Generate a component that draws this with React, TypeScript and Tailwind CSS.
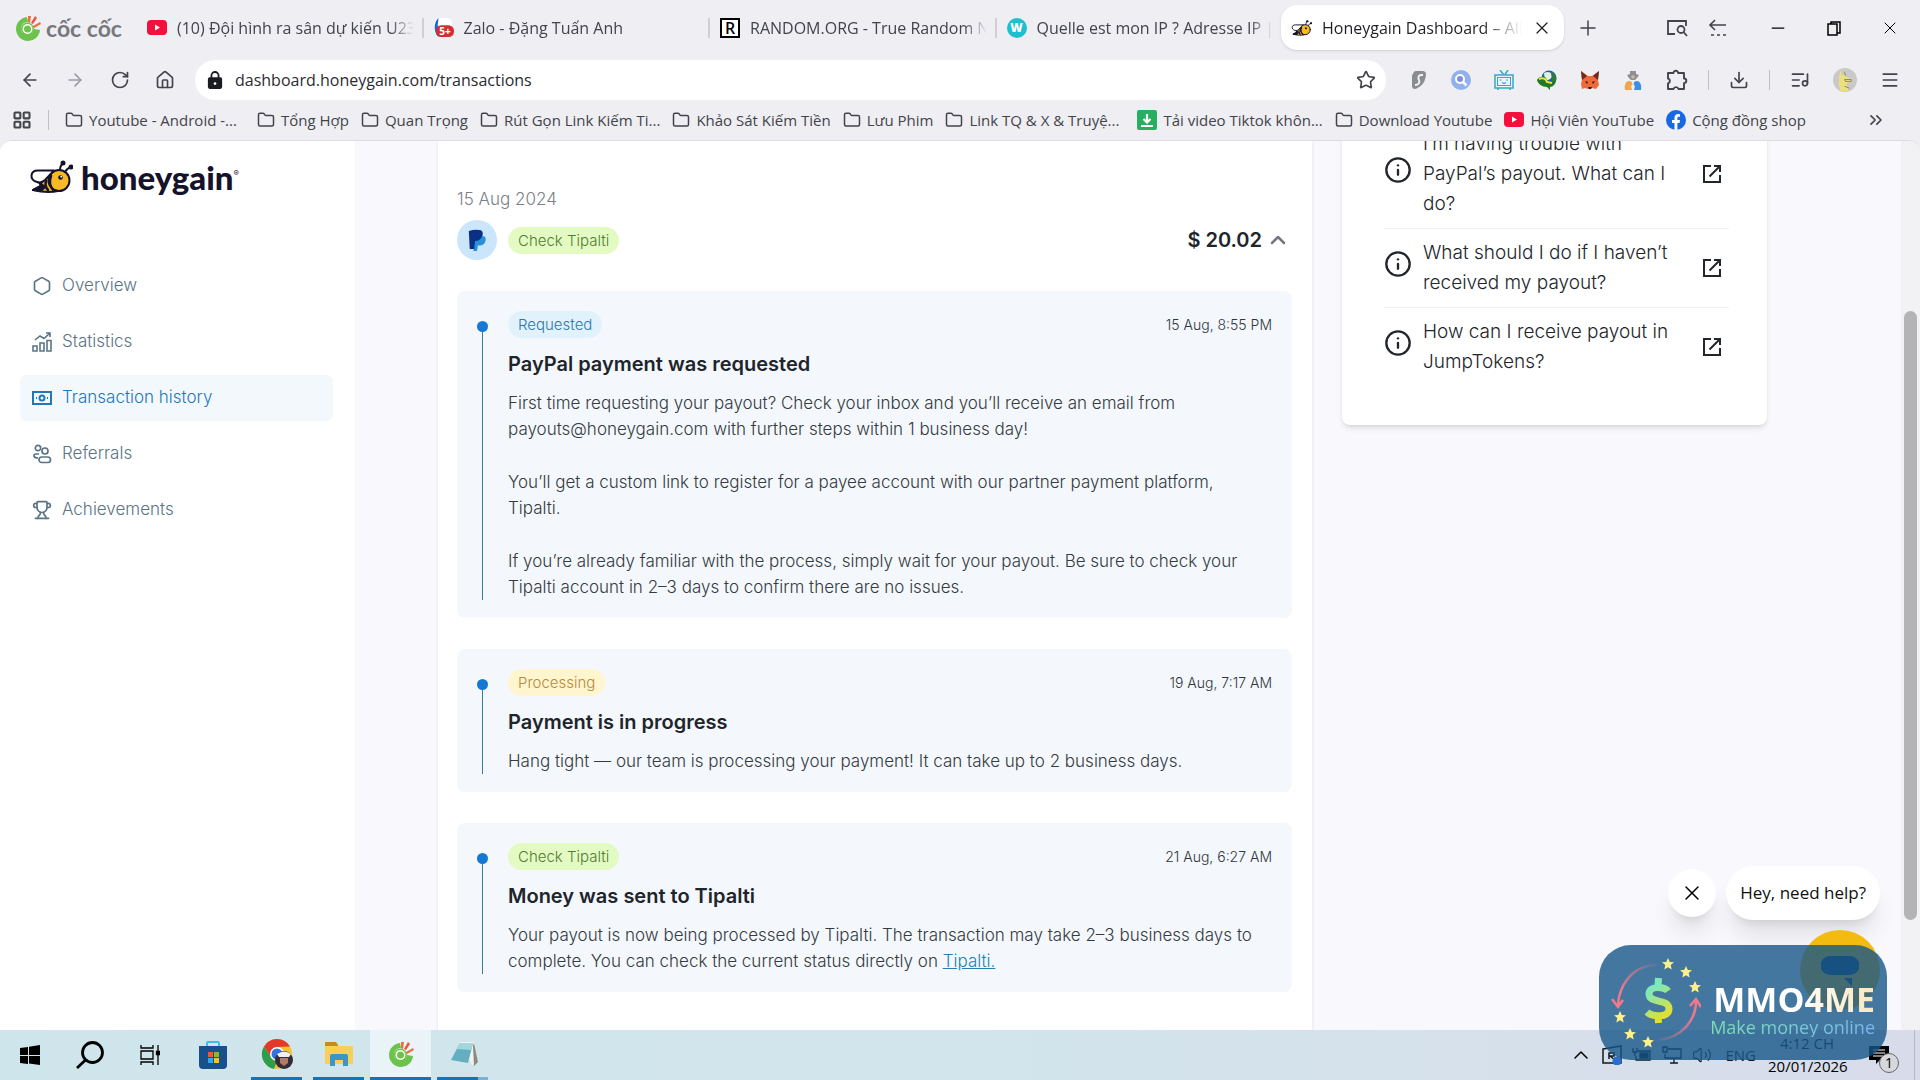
import React from 'react';
import {
  ArrowLeft, ArrowRight, RotateCw, House, Star, Download, ListMusic, Menu, X, Plus, Minus,
  Folder, LayoutGrid, ChevronsRight, ChevronUp, Hexagon, Trophy, Info, Volume2,
} from 'lucide-react';

interface Bookmark {
  label: string;
  icon?: React.ReactNode;
}

interface Step {
  status: string;
  badge: string;
  time: string;
  title: string;
  body: React.ReactNode[];
}

const CocCocMark = ({ className }: { className?: string }) => (
  <svg viewBox="0 0 28 28" className={className} aria-hidden="true">
    <path d="M13 3A12 12 0 1 0 26 16l-6-1a6.500 6.500 0 1 1-6-7z" fill="#6cc24a" />
    <circle cx="13.500" cy="15" r="6.500" fill="#6cc24a" />
    <circle cx="13.500" cy="15" r="5" fill="#fff" />
    <circle cx="13.500" cy="15" r="3.500" fill="#6cc24a" />
    <path d="M14 8l0-6 3 0-1 7z" fill="#e8703a" />
    <path d="M17 9l4-7 2 2-4 6z" fill="#e8553a" />
    <path d="M19 12l7-4 1 2-7 4z" fill="#e8703a" />
  </svg>
);

const YoutubeIcon = () => (
  <svg viewBox="0 0 20 16" className="h-4 w-5 shrink-0" aria-hidden="true">
    <rect width="20" height="15" rx="4" fill="#f4103c" />
    <path d="M8 4.500v6l5-3z" fill="#fff" />
  </svg>
);

const BeeIcon = ({ className }: { className?: string }) => (
  <svg viewBox="0 0 44 34" className={className} fill="none" stroke="#15132b" strokeWidth="2" strokeLinecap="round" strokeLinejoin="round" aria-hidden="true">
    <path d="M20 12 10 22l2 4-8 4c8 2 15 3 25 1z" fill="#f9b826" />
    <path d="M10 22l3 3-9 5c3 0 6 1 9 0l3-3z" fill="#15132b" />
    <circle cx="30" cy="20.500" r="10.500" fill="#f9b826" />
    <path d="M25 10.500H9c-8 0-9 9-1 11.500 3 1 6 0 8-2l9-9.500z" fill="#fff" />
    <path d="M17 21c-1 4 0 7 2 9M22 16c-2 5-1 11 3 15" strokeWidth="2.600" />
    <path d="M31 10c0-3 1-5 3-7M36 12c1-2 3-4 6-5" />
    <circle cx="34" cy="3" r="1.500" fill="#15132b" />
    <circle cx="42" cy="7" r="1.500" fill="#15132b" />
    <circle cx="31.500" cy="17.500" r="2.300" fill="#15132b" stroke="none" />
    <circle cx="32.200" cy="16.700" r="0.900" fill="#fff" stroke="none" />
  </svg>
);

const ExternalIcon = () => (
  <svg viewBox="0 0 24 24" className="size-6 shrink-0" fill="none" stroke="#22262b" strokeWidth="2" aria-hidden="true">
    <path d="M11 4H4v16h16v-7M14 4h6v6M20 4 9.500 14.500" />
  </svg>
);

const PuzzleIcon = () => (
  <svg viewBox="0 0 22 22" className="size-[22px]" fill="none" stroke="currentColor" strokeWidth="1.900" strokeLinejoin="round" aria-hidden="true">
    <path d="M2 4h5.500a2.300 2.300 0 1 1 4.600 0H18v5.500a2.300 2.300 0 1 1 0 4.600V20h-5.500a2.600 2.600 0 0 0-5 0H2v-5.500a2.600 2.600 0 0 0 0-5z" />
  </svg>
);

const ScanSearchIcon = () => (
  <svg viewBox="0 0 22 20" className="h-5 w-[22px]" fill="none" stroke="currentColor" strokeWidth="1.800" aria-hidden="true">
    <path d="M9 16H2V3h18v5" />
    <circle cx="15" cy="11.500" r="3.500" />
    <path d="m17.500 14 3.500 4" />
  </svg>
);

const PaypalIcon = () => (
  <svg viewBox="0 0 22 24" className="h-6 w-5" aria-hidden="true">
    <path d="M10 8h8c3 0 3 4 2 6-1 3-3 4-6 4h-2l-1 6H7z" fill="#2790d8" />
    <path d="M2 2q7-2 11-1c4 0 5 3 4 6s-4 6-7 6H9L8 22H3z" fill="#0a2f87" />
  </svg>
);

const tabs = [
  {
    title: '(10) Đội hình ra sân dự kiến U23',
    icon: <YoutubeIcon />,
  },
  {
    title: 'Zalo - Đặng Tuấn Anh',
    icon: (
      <svg viewBox="0 0 22 22" className="size-5 shrink-0" aria-hidden="true">
        <rect width="20" height="20" rx="6" fill="#fff" />
        <path d="M5 0C0 4-1 14 4 20L8 20 4 8z" fill="#1768d8" />
        <rect x="2" y="8" width="20" height="13" rx="6" fill="#d22f35" />
        <text x="12" y="19" fontSize="11" fontWeight="700" fill="#fff" textAnchor="middle" fontFamily="Open Sans">5+</text>
      </svg>
    ),
  },
  {
    title: 'RANDOM.ORG - True Random N',
    icon: (
      <span className="flex size-5 shrink-0 items-center justify-center border-2 border-black bg-white text-base leading-4 font-semibold text-black">R</span>
    ),
  },
  {
    title: 'Quelle est mon IP ? Adresse IP |',
    icon: (
      <span className="flex size-5 shrink-0 items-center justify-center rounded-full bg-[#1cc0cf] text-xs font-extrabold text-white">W</span>
    ),
  },
];

const bookmarks: Bookmark[] = [
  { label: 'Youtube - Android -...' },
  { label: 'Tổng Hợp' },
  { label: 'Quan Trọng' },
  { label: 'Rút Gọn Link Kiếm Ti...' },
  { label: 'Khảo Sát Kiếm Tiền' },
  { label: 'Lưu Phim' },
  { label: 'Link TQ & X & Truyệ...' },
  {
    label: 'Tải video Tiktok khôn...',
    icon: (
      <svg viewBox="0 0 20 20" className="size-5 shrink-0" aria-hidden="true">
        <rect width="20" height="20" rx="2" fill="#27ae60" />
        <path d="M10 4v8M6.500 9l3.500 3.500L13.500 9M4 16h12" stroke="#fff" strokeWidth="2.200" fill="none" />
      </svg>
    ),
  },
  { label: 'Download Youtube' },
  { label: 'Hội Viên YouTube', icon: <YoutubeIcon /> },
  {
    label: 'Cộng đồng shop',
    icon: (
      <svg viewBox="0 0 20 20" className="size-5 shrink-0" aria-hidden="true">
        <circle cx="10" cy="10" r="10" fill="#1668e3" />
        <path d="M8.500 20v-7H6v-3h2.500V8c0-2.500 1.500-4 3.700-4l1.800.2v2.500h-1.200c-1.100 0-1.400.7-1.400 1.400V10h2.600l-.5 3h-2.100v7z" fill="#fff" />
      </svg>
    ),
  },
];

const extensions = [
  {
    name: 'Surfshark',
    icon: (
      <svg viewBox="0 0 20 20" className="size-5">
        <path d="M8 1h6c3 0 4 1 4 4-1 8-5 12-11 14-2 0-3-1-3-3L4 6c1-3 2-5 4-5z" fill="#8b8c90" />
        <path d="M15 5h-2c-3 0-3 4-2 5 1 2 0 5-4 5" stroke="#f1f1f5" strokeWidth="2" fill="none" />
      </svg>
    ),
  },
  {
    name: 'Search',
    icon: (
      <svg viewBox="0 0 20 20" className="size-5">
        <circle cx="10" cy="10" r="10" fill="#91b1ee" />
        <circle cx="9" cy="9" r="4" stroke="#fff" strokeWidth="2" fill="#7f8fd8" />
        <path d="m12 12 3.500 3.500" stroke="#fff" strokeWidth="2.500" />
      </svg>
    ),
  },
  {
    name: 'TV',
    icon: (
      <svg viewBox="0 0 20 20" className="size-5" fill="none" stroke="#33a9c4" strokeWidth="1.500">
        <path d="M6 0l3.500 4.500M14 0l-3 4.500M4 18v2M16 18v2" />
        <rect x="1" y="5" width="18" height="13" fill="#e9f8fb" />
        <rect x="3.500" y="7.500" width="13" height="8" strokeWidth="1" />
        <path d="M5.500 10h2M12 10h2M8 12.500l2 1 2-1" strokeWidth="1.200" />
      </svg>
    ),
  },
  {
    name: 'Download Manager',
    icon: (
      <svg viewBox="0 0 20 20" className="size-5">
        <circle cx="12" cy="8" r="7.500" fill="#1f5f9e" />
        <path d="M7 3c4-2 7-1 8 2s-3 5-7 6z" fill="#dff0e0" />
        <path d="M14 2c4 1 6 5 5 9l-4 1z" fill="#2f7a3b" />
        <path d="M0 10c1-3 5-4 8-3l3 4 4 1 4-2c0 4-3 7-6 7v3l-3-3c-5 0-9-3-10-7z" fill="#237a22" />
        <path d="M2 9c4-2 7 0 8 3l5 1" stroke="#f0e34a" strokeWidth="2" fill="none" />
      </svg>
    ),
  },
  {
    name: 'MetaMask',
    icon: (
      <svg viewBox="0 0 20 20" className="size-5">
        <path d="M1 1l7 5h4l7-5-1 9 1 5-3 4-4-1-2 1H8l-3-1-3 1-1-5 1-4z" fill="#ed6a3a" />
        <path d="M1 1l6 5-5 4zM19 1l-6 5 5 4z" fill="#6b2b22" />
        <path d="M5 11l3 1-1 2zM15 11l-3 1 1 2zM8 17h4l-1 2H9z" fill="#2b1a1a" />
      </svg>
    ),
  },
  {
    name: 'Incognito',
    icon: (
      <svg viewBox="0 0 20 20" className="size-5">
        <path d="M7 1h6v3l3 1-2 3-2 2H8L6 8 4 5l3-1z" fill="#8f8f93" />
        <circle cx="10" cy="7" r="1.800" fill="#c9b9a0" />
        <path d="M2 20c-1-5 1-9 4-9 4 0 4 4 2 5l1 4z" fill="#f0a54e" />
        <path d="M18 20c1-5-1-9-4-9-4 0-4 4-2 5l-1 4z" fill="#3d8fe0" />
      </svg>
    ),
  },
];

const navItems = [
  { label: 'Overview', icon: <Hexagon className="size-5" strokeWidth={2} /> },
  {
    label: 'Statistics',
    icon: (
      <svg viewBox="0 0 20 20" className="size-5" fill="none" stroke="currentColor" strokeWidth="1.600">
        <path d="M1 14h4v5H1zM8 11h4v8H8zM15 8.500h4V19h-4zM3 8l5-4 4 2.500L18 1M14 1h4v4" />
      </svg>
    ),
  },
  {
    label: 'Transaction history',
    active: true,
    icon: (
      <svg viewBox="0 0 20 20" className="size-5" fill="none" stroke="currentColor" strokeWidth="2">
        <rect x="1" y="4" width="18" height="12" />
        <circle cx="10" cy="10" r="2.500" />
        <path d="M4 10h1M15 10h1" />
      </svg>
    ),
  },
  {
    label: 'Referrals',
    icon: (
      <svg viewBox="0 0 20 20" className="size-5" fill="none" stroke="currentColor" strokeWidth="1.700">
        <circle cx="6" cy="4" r="2.700" />
        <circle cx="13" cy="7" r="3" />
        <path d="M7 10H4c-3 0-3 4 2 4" />
        <rect x="7" y="13" width="11.500" height="5.500" rx="2.700" />
      </svg>
    ),
  },
  { label: 'Achievements', icon: <Trophy className="size-5" strokeWidth={2} /> },
];

const steps: Step[] = [
  {
    status: 'Requested',
    badge: 'bg-[#e2f2fc] text-[#2d78ad]',
    time: '15 Aug, 8:55 PM',
    title: 'PayPal payment was requested',
    body: [
      'First time requesting your payout? Check your inbox and you’ll receive an email from payouts@honeygain.com with further steps within 1 business day!',
      'You’ll get a custom link to register for a payee account with our partner payment platform, Tipalti.',
      'If you’re already familiar with the process, simply wait for your payout. Be sure to check your Tipalti account in 2–3 days to confirm there are no issues.',
    ],
  },
  {
    status: 'Processing',
    badge: 'bg-[#fff5cf] text-[#b98a35]',
    time: '19 Aug, 7:17 AM',
    title: 'Payment is in progress',
    body: ['Hang tight — our team is processing your payment! It can take up to 2 business days.'],
  },
  {
    status: 'Check Tipalti',
    badge: 'bg-[#e3fbc3] text-[#4f7c31]',
    time: '21 Aug, 6:27 AM',
    title: 'Money was sent to Tipalti',
    body: [
      <>
        Your payout is now being processed by Tipalti. The transaction may take 2–3 business days to complete. You can
        check the current status directly on <a href="#tipalti" className="text-[#2480b0] underline">Tipalti.</a>
      </>,
    ],
  },
];

const questions = [
  'I’m having trouble with PayPal’s payout. What can I do?',
  'What should I do if I haven’t received my payout?',
  'How can I receive payout in JumpTokens?',
];

const BrowserHeader = () => (
  <header className="bg-[#eeeef3] text-[#43444a]">
    <div className="flex h-[55px] items-center">
      <div className="flex w-[137px] shrink-0 items-center gap-1 pl-[14px]">
        <CocCocMark className="size-7" />
        <span className="font-['Lato'] text-[23px] leading-7 font-bold text-[#77787c]">cốc cốc</span>
      </div>
      {tabs.map((tab) => (
        <button key={tab.title} type="button" className="flex h-5 min-w-0 flex-1 items-center gap-[10px] border-r-2 border-[#cfcfd4] pr-2 pl-[10px] text-left text-base last-of-type:border-0">
          {tab.icon}
          <span className="min-w-0 flex-1 overflow-hidden mask-r-from-90% whitespace-nowrap">{tab.title}</span>
        </button>
      ))}
      <div className="flex h-[45px] w-[283px] shrink-0 items-center gap-[10px] rounded-2xl bg-white px-[10px] text-base text-[#1f2023] shadow">
        <BeeIcon className="h-5 w-[21px] shrink-0" />
        <span className="min-w-0 flex-1 overflow-hidden mask-r-from-80% whitespace-nowrap">Honeygain Dashboard – All</span>
        <button type="button" aria-label="Close tab" className="mr-[2px]"><X className="size-5" strokeWidth={1.5} /></button>
      </div>
      <div className="flex w-[356px] shrink-0 items-center pl-3">
        <button type="button" aria-label="New tab"><Plus className="size-6" strokeWidth={1.5} /></button>
        <button type="button" aria-label="Search tabs" className="ml-auto"><ScanSearchIcon /></button>
        <button type="button" aria-label="Recent tabs" className="ml-5">
          <svg viewBox="0 0 20 20" className="size-5" fill="none" stroke="currentColor" strokeWidth="1.600">
            <path d="M2 7h16M7 2 2 7l5 5M3 17h3M9 17h3M15 17h3" />
          </svg>
        </button>
        <button type="button" aria-label="Minimize" className="ml-10 text-black"><Minus className="size-5" strokeWidth={1.5} /></button>
        <button type="button" aria-label="Restore" className="ml-9 text-black">
          <svg viewBox="0 0 20 20" className="size-5" fill="none" stroke="currentColor" strokeWidth="1.500">
            <path d="M4 6h9v11H4zM7 6V4h9v11h-3" />
          </svg>
        </button>
        <button type="button" aria-label="Close" className="mr-5 ml-9 text-black"><X className="size-5" strokeWidth={1.2} /></button>
      </div>
    </div>
    <div className="flex h-[50px] items-center pr-5">
      <div className="flex w-[195px] shrink-0 items-center gap-[25px] pl-5">
        <button type="button" aria-label="Back"><ArrowLeft className="size-5" strokeWidth={2} /></button>
        <button type="button" aria-label="Forward" className="text-[#9b9ca1]"><ArrowRight className="size-5" strokeWidth={2} /></button>
        <button type="button" aria-label="Reload"><RotateCw className="size-5" strokeWidth={2} /></button>
        <button type="button" aria-label="Home"><House className="size-5" strokeWidth={2} /></button>
      </div>
      <div className="flex h-10 flex-1 items-center gap-2 rounded-full bg-white pr-[10px] pl-3">
        <svg viewBox="0 0 18 22" className="mr-1 h-5 w-4 shrink-0" aria-hidden="true">
          <rect x="1" y="8" width="16" height="13" rx="2" fill="#1b1c20" />
          <path d="M5 9V6a4 4 0 0 1 8 0v3" stroke="#1b1c20" strokeWidth="2" fill="none" />
          <circle cx="9" cy="15" r="1.500" fill="#fff" />
        </svg>
        <input
          type="text"
          aria-label="Address"
          defaultValue="dashboard.honeygain.com/transactions"
          className="min-w-0 flex-1 bg-transparent text-base text-[#2b2c30] outline-none"
        />
        <button type="button" aria-label="Bookmark"><Star className="size-5" strokeWidth={2} /></button>
      </div>
      <div className="flex items-center gap-[23px] pl-[22px]">
        {extensions.map((ext) => (
          <button key={ext.name} type="button" aria-label={ext.name}>{ext.icon}</button>
        ))}
        <button type="button" aria-label="Extensions"><PuzzleIcon /></button>
        <span className="-mx-[3px] h-5 w-px bg-[#bfc0c5]" />
        <button type="button" aria-label="Downloads"><Download className="size-5" strokeWidth={2} /></button>
        <span className="-mx-[3px] h-5 w-px bg-[#bfc0c5]" />
        <button type="button" aria-label="Media"><ListMusic className="size-5" strokeWidth={2} /></button>
        <button type="button" aria-label="Profile">
          <svg viewBox="0 0 25 25" className="size-6">
            <circle cx="12.500" cy="12.500" r="12.500" fill="#c9cac8" />
            <path d="M8 2l1 5 3 1 7 4v2l-5 2 2 8H8C5 18 6 7 8 2z" fill="#ebe07a" />
            <path d="M12 4l1 4M12 12h7v2h-6zM12 19l5 2" stroke="#8d8560" fill="none" />
          </svg>
        </button>
        <button type="button" aria-label="Menu"><Menu className="size-5" strokeWidth={2} /></button>
      </div>
    </div>
    <nav className="flex h-[35px] items-center gap-3 pb-[6px] pl-3 text-[15px] leading-5">
      <div className="flex shrink-0 items-center gap-4 pr-1">
        <LayoutGrid className="size-5" strokeWidth={2.5} />
        <span className="h-5 w-px bg-[#bfc0c5]" />
      </div>
      {bookmarks.map((item) => (
        <a
          key={item.label}
          href="#bookmark"
          className={
            item.label.endsWith('...')
              ? 'flex min-w-[180px] shrink-0 items-center gap-[6px] whitespace-nowrap'
              : 'flex shrink-0 items-center gap-[6px] whitespace-nowrap'
          }
        >
          {item.icon ?? <Folder className="size-[18px]" strokeWidth={2} />}
          {item.label}
        </a>
      ))}
      <ChevronsRight className="mr-[34px] ml-auto size-5 shrink-0" strokeWidth={2} />
    </nav>
  </header>
);

const Sidebar = () => (
  <aside className="w-[355px] shrink-0 bg-white pt-[18px] pr-[22px] pl-5">
    <div className="flex items-center gap-2 pl-[9px] text-[#15132b]">
      <BeeIcon className="h-[34px] w-11" />
      <span className="flex items-center font-['Lato'] text-[33px] leading-9 font-black">
        honeygain<sup className="font-['Inter'] text-[8px] font-normal">®</sup>
      </span>
    </div>
    <nav className="mt-[68px] flex flex-col gap-[10px]">
      {navItems.map((item) => (
        <a
          key={item.label}
          href="#nav"
          className={
            item.active
              ? 'flex h-[46px] items-center gap-[10px] rounded-md bg-[#f3f8fd] px-3 text-[17px] font-light text-[#1f78b8]'
              : 'flex h-[46px] items-center gap-[10px] rounded-md px-3 text-[17px] font-light text-[#5b7485]'
          }
        >
          {item.icon}
          {item.label}
        </a>
      ))}
    </nav>
  </aside>
);

const StepCard: React.FC<{ step: Step }> = ({ step }) => (
  <li className="flex gap-5 rounded-lg bg-[#f4f8fc] px-5 pt-5 pb-[18px]">
    <div className="flex w-[11px] shrink-0 flex-col items-center pt-[10px]">
      <span className="size-[11px] shrink-0 rounded-full bg-[#1478d4]" />
      <span className="w-px flex-1 bg-[#2c7e9c]" />
    </div>
    <div className="min-w-0 flex-1">
      <div className="flex h-[27px] items-center justify-between">
        <span className={`${step.badge} rounded-full px-[10px] text-[15px] leading-[27px] font-light`}>{step.status}</span>
        <time className="text-sm font-light text-[#2f363c]">{step.time}</time>
      </div>
      <h3 className="mt-[11px] text-xl leading-[30px] font-semibold text-[#20242b]">{step.title}</h3>
      <div className="mt-[11px] flex flex-col gap-[27px] pr-4 text-[17px] leading-[26px] font-light text-[#343b41]">
        {step.body.map((text, i) => <p key={i}>{text}</p>)}
      </div>
    </div>
  </li>
);

const Taskbar = () => (
  <footer className="flex h-[50px] shrink-0 items-center bg-linear-to-r from-[#cfe5ec] via-[#d2e5ec] to-[#d8dcea] text-black">
    <button type="button" aria-label="Start" className="flex w-[60px] justify-center">
      <svg viewBox="0 0 20 20" className="size-5"><path d="M0 3l8-1v8H0zM9 1.800 20 0v10H9zM0 11h8v8l-8-1zM9 11h11v9L9 18.500z" /></svg>
    </button>
    <button type="button" aria-label="Search" className="flex w-[60px] justify-center">
      <svg viewBox="0 0 28 28" className="size-7" fill="none" stroke="currentColor" strokeWidth="2.800"><circle cx="16.500" cy="11.500" r="10" /><path d="M9.500 19 1 27" /></svg>
    </button>
    <button type="button" aria-label="Task view" className="flex w-[60px] justify-center">
      <svg viewBox="0 0 20 20" className="size-5" fill="none" stroke="currentColor" strokeWidth="1.300"><path d="M1 0v3h12V0M1 20v-3h12v3M1 6h12v8H1zM18 0v6M18 10v10" /><path d="M16.500 6.500h3v3h-3z" fill="currentColor" /></svg>
    </button>
    <button type="button" aria-label="Store" className="flex w-[66px] justify-center">
      <svg viewBox="0 0 30 30" className="size-[30px]">
        <path d="M9 6V3q0-1 1-1h10q1 0 1 1v3" stroke="#39bfe8" strokeWidth="2" fill="none" />
        <path d="M1 6h28v19q0 4-4 4H5q-4 0-4-4z" fill="#17508c" />
        <path d="M10 12h5v5h-5z" fill="#f1582c" /><path d="M16 12h5v5h-5z" fill="#85bb30" />
        <path d="M10 18h5v5h-5z" fill="#31a8e8" /><path d="M16 18h5v5h-5z" fill="#fbc02c" />
      </svg>
    </button>
    <button type="button" aria-label="Chrome" className="ml-[5px] flex h-full w-[51px] items-center justify-center border-b-3 border-[#1473ba]">
      <svg viewBox="0 0 32 32" className="size-8">
        <circle cx="16" cy="16" r="15" fill="#f6c32c" />
        <path d="M3 8.500A15 15 0 0 1 29 8.500L16 9l-6 10z" fill="#e2392b" />
        <path d="M3 8.500 10 19l6 4-3 8A15 15 0 0 1 3 8.500z" fill="#2f9e4c" />
        <circle cx="16" cy="16" r="7" fill="#fff" /><circle cx="16" cy="16" r="5.500" fill="#2f74e0" />
        <circle cx="23" cy="22" r="9" fill="#352c38" /><path d="M16 16q7-5 14 0l-2 3H18z" fill="#f0eff2" />
        <path d="M19 20h8v5l-4 3-4-3z" fill="#b27a68" />
      </svg>
    </button>
    <button type="button" aria-label="Explorer" className="ml-[11px] flex h-full w-[51px] items-center justify-center border-b-3 border-[#1473ba]">
      <svg viewBox="0 0 28 26" className="h-[26px] w-7">
        <path d="M0 2q0-1 1-1h10l2 3v3H0z" fill="#c98a1d" /><path d="M0 5h27q1 0 1 1v17H0z" fill="#f9cf58" />
        <path d="M5 25V15q0-2 2-2h14q2 0 2 2v10h-5v-6h-8v6z" fill="#3a96c9" />
      </svg>
    </button>
    <button type="button" aria-label="Cốc Cốc" className="ml-[6px] flex h-full w-[61px] items-center justify-center border-b-3 border-[#1473ba] bg-[#eaf3f8]">
      <CocCocMark className="size-7" />
    </button>
    <button type="button" aria-label="Notepad" className="ml-[6px] flex h-full w-[41px] items-center justify-end border-b-3 border-[#1473ba]">
      <svg viewBox="0 0 28 26" className="h-[26px] w-7">
        <path d="M10 1h14l4 20-6 3z" fill="#f1f1ee" /><path d="M24 2l4 19-4 4-1-20z" fill="#8b8a80" />
        <path d="M10 2h13l-5 20-17-3z" fill="#64aebf" /><path d="M10 2h13l-2 7-14-1z" fill="#a5d5dd" />
      </svg>
    </button>
    <span className="h-full w-[10px] border-b-3 border-[#7fb0d5]" />
    <div className="ml-auto flex h-full items-center text-[#10181f]">
      <ChevronUp className="size-6 text-black" strokeWidth={1.5} />
      <svg viewBox="0 0 20 20" className="ml-[9px] size-5" fill="none" stroke="currentColor" strokeWidth="1.500"><path d="M1 4l18-3v17H1zM7 14V8h5v3H8l5 4" /><circle cx="15" cy="16" r="4.500" fill="#2a6fd0" stroke="none" /></svg>
      <svg viewBox="0 0 20 14" className="ml-[10px] h-[14px] w-5" fill="none" stroke="currentColor" strokeWidth="1.300"><path d="M6 3h12v9H4V8M1 0v4h4V0M3 4v4" /><path d="M8 5h8v5H8z" fill="currentColor" /></svg>
      <svg viewBox="0 0 20 18" className="ml-[10px] h-[18px] w-5" fill="none" stroke="currentColor" strokeWidth="1.300"><path d="M6 3h13v9H3V8M8 17h8M12 12v5M1 1h4v5H1z" /></svg>
      <Volume2 className="ml-[10px] size-5" strokeWidth={1.3} />
      <span className="ml-[13px] text-[15px]">ENG</span>
      <div className="ml-3 w-[78px] text-center text-[15px] leading-[23px]">
        <div>4:12 CH</div>
        <div className="whitespace-nowrap text-black">20/01/2026</div>
      </div>
      <button type="button" aria-label="Notifications" className="relative mr-[25px] ml-[23px] text-black">
        <svg viewBox="0 0 20 20" className="size-5"><path d="M0 1h20v14h-9l-4 4v-4H0z" /><path d="M4 5h12M4 8h12M4 11h12" stroke="#fff" strokeWidth="1" /></svg>
        <span className="absolute top-2 left-[10px] flex size-5 items-center justify-center rounded-full border border-[#666] bg-[#d5d8dc] text-sm">1</span>
      </button>
      <span className="mr-[5px] h-full w-px bg-[#b5bac6]" />
    </div>
  </footer>
);

const HelpChat = () => (
  <div className="absolute right-10 bottom-[70px] flex flex-col items-end gap-[10px] font-['Open_Sans',sans-serif]">
    <div className="flex items-center gap-[10px]">
      <button type="button" aria-label="Dismiss" className="flex size-12 items-center justify-center rounded-full bg-white text-black shadow-xl">
        <X className="size-6" strokeWidth={1.5} />
      </button>
      <button type="button" className="h-[54px] rounded-full bg-white px-[14px] text-[17px] whitespace-nowrap text-[#111] shadow-xl">Hey, need help?</button>
    </div>
    <button type="button" aria-label="Open chat" className="flex size-20 items-center justify-center rounded-full bg-[#f3bb10]">
      <svg viewBox="0 0 38 32" className="h-8 w-[38px]"><path d="M9 2h20a9 9 0 0 1 0 19H9A9 9 0 0 1 9 2zM23 24h8v8z" fill="#173f6b" /></svg>
    </button>
  </div>
);

const star = 'M0-6 1.800-2 6-1.800 2.700 1 3.700 5.500 0 3.200-3.700 5.500-2.700 1-6-1.800-1.800-2z';

const Watermark = () => (
  <div className="absolute right-[33px] bottom-5 flex h-[115px] w-[288px] items-center rounded-[32px] bg-[#175688]/80 pr-3 pl-3">
    <svg viewBox="0 0 90 92" className="h-[92px] w-[90px] shrink-0" aria-hidden="true">
      <defs>
        <linearGradient id="dollar" gradientUnits="userSpaceOnUse" x1="36" y1="26" x2="60" y2="62">
          <stop offset="0.200" stopColor="#7fe8b8" />
          <stop offset="0.900" stopColor="#e6df2e" />
        </linearGradient>
        <linearGradient id="arcLeft" x1="1" y1="0" x2="0" y2="1">
          <stop offset="0" stopColor="#f2788a" stopOpacity="0.100" />
          <stop offset="0.700" stopColor="#f2788a" />
        </linearGradient>
        <linearGradient id="arcRight" x1="0" y1="1" x2="1" y2="0">
          <stop offset="0" stopColor="#f2788a" stopOpacity="0.100" />
          <stop offset="0.700" stopColor="#f2788a" />
        </linearGradient>
      </defs>
      <path d="M46 8C20 8 8 30 7 48M1 42l6 8 5-7" stroke="url(#arcLeft)" strokeWidth="2.500" fill="none" />
      <path d="M47 83c24-2 38-20 38-39M79 49l6-7 5 8" stroke="url(#arcRight)" strokeWidth="2.500" fill="none" />
      {[[57, 7], [75, 15], [84, 30], [9, 60], [19, 77], [37, 85]].map(([x, y]) => (
        <path key={x} d={star} transform={`translate(${x} ${y})`} fill="#fff08a" />
      ))}
      <path d="M57 34c-3-4-19-6-19 3 0 10 20 4 20 15 0 9-17 8-22 3M47.500 21 47 29M47 58l.5 8" stroke="url(#dollar)" strokeWidth="7" fill="none" />
    </svg>
    <div className="ml-auto flex flex-col items-end pt-3">
      <div className="bg-linear-to-r from-white from-50% to-[#fbe6bd] bg-clip-text text-[34px] leading-9 font-bold text-transparent">MMO4ME</div>
      <div className="bg-linear-to-r from-[#7fe0b0] to-[#79b7f0] bg-clip-text text-lg leading-5 whitespace-nowrap text-transparent">Make money online</div>
    </div>
  </div>
);

const App: React.FC = () => {
  return (
    <div className="relative flex h-screen flex-col overflow-hidden bg-[#eeeef3] font-['Open_Sans',sans-serif]">
      <BrowserHeader />
      <div className="flex min-h-0 flex-1 overflow-hidden rounded-t-xl border-t border-[#dcdce2] bg-[#f8f8fd] font-['Inter',sans-serif]">
        <Sidebar />
        <main className="flex min-w-0 flex-1 items-start gap-[30px] pr-[134px] pl-[83px]">
          <section className="min-w-0 flex-1 self-stretch bg-white pt-[45px] pr-5 pl-[19px] shadow-sm">
            <time className="block text-[17px] leading-[26px] font-light text-[#7b8087]">15 Aug 2024</time>
            <div className="mt-2 flex items-center justify-between pr-[2px]">
              <div className="flex items-center gap-[11px]">
                <span className="flex size-10 items-center justify-center rounded-full bg-[#cbe5fb]"><PaypalIcon /></span>
                <span className="rounded-full bg-[#e3fbc3] px-[10px] text-[15px] leading-[27px] font-light text-[#4f7c31]">Check Tipalti</span>
              </div>
              <button type="button" className="flex items-center gap-1 text-xl font-semibold text-[#20242b]">
                $ 20.02
                <ChevronUp className="size-6 text-[#75797f]" strokeWidth={2.5} />
              </button>
            </div>
            <ul className="mt-[31px] flex flex-col gap-[31px]">
              {steps.map((step) => <StepCard key={step.status} step={step} />)}
            </ul>
          </section>
          <section className="-mt-[21px] w-[425px] shrink-0 rounded-lg bg-white pr-[38px] pb-[39px] pl-[42px] shadow-md">
            {questions.map((question) => (
              <a
                key={question}
                href="#faq"
                className="flex items-center gap-[11px] border-b border-[#f1f2f5] py-[9px] pr-[5px] text-[19px] leading-[30px] font-light text-[#22262b] last:border-0"
              >
                <Info className="mb-2 size-7 shrink-0" strokeWidth={2} />
                <span className="w-[260px]">{question}</span>
                <span className="ml-auto"><ExternalIcon /></span>
              </a>
            ))}
          </section>
        </main>
        <div className="w-[19px] shrink-0 bg-[#f2f2f5] px-[3px] pt-[170px]">
          <div className="h-[609px] rounded-full bg-[#b4b4b6]" />
        </div>
      </div>
      <Taskbar />
      <HelpChat />
      <Watermark />
    </div>
  );
};

export default App;
